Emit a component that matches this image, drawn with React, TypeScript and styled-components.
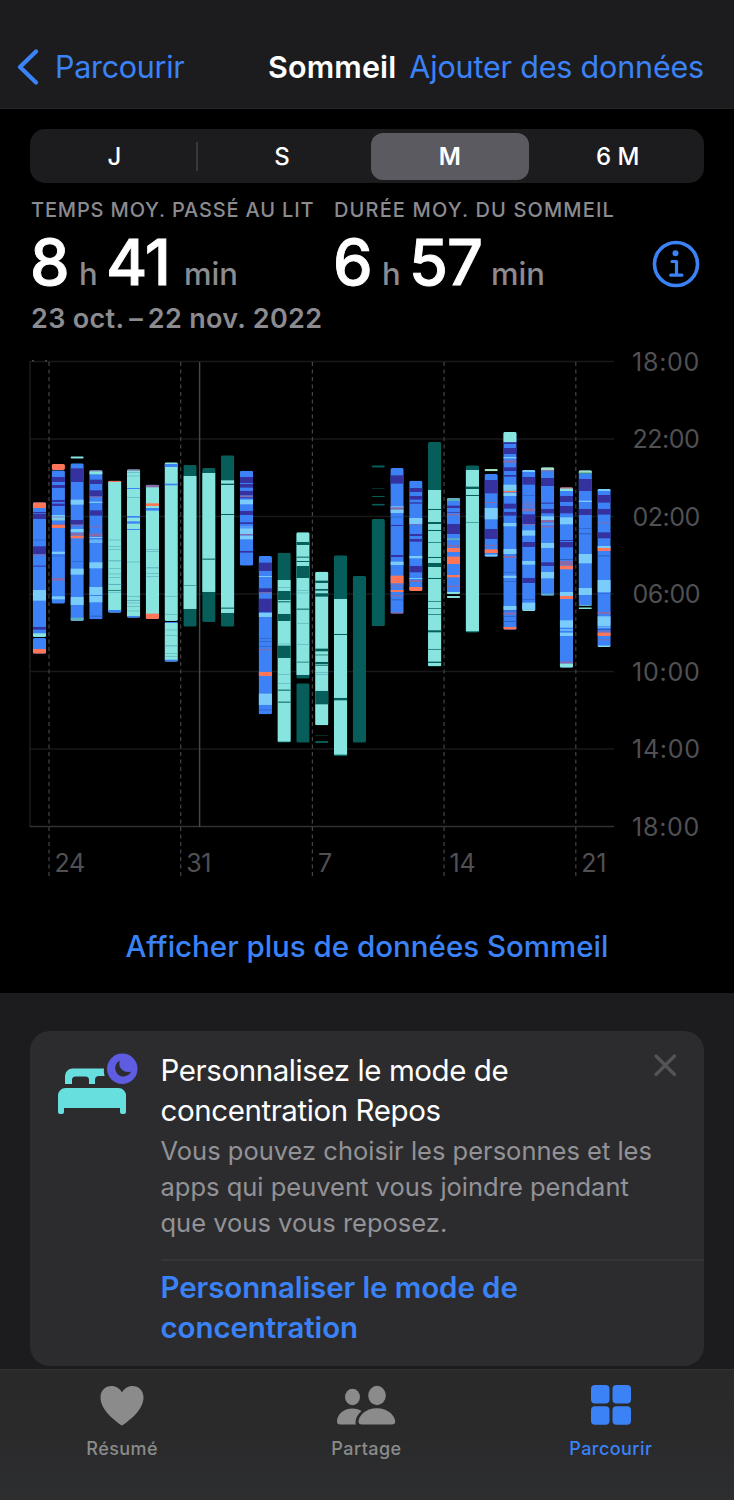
import React from 'react';
import styled, { createGlobalStyle } from 'styled-components';

const GlobalStyle = createGlobalStyle`
  * { box-sizing: border-box; }
  body { margin: 0; background: #000; }
  button { border: 0; padding: 0; background: none; font: inherit; color: inherit; letter-spacing: inherit; }
  h1, h2, p { margin: 0; }
`;

const blue = '#3b82f7';

const Screen = styled.div`
  width: 734px;
  height: 1500px;
  display: flex;
  flex-direction: column;
  overflow: hidden;
  background: #1c1c1e;
  color: #fff;
  font-family: Inter, 'Liberation Sans', sans-serif;
  white-space: nowrap;
`;

const Header = styled.header`
  height: 109px;
  flex: none;
  display: flex;
  align-items: center;
  padding: 25px 30px 0 17px;
  background: #1c1c1e;
  border-bottom: 1px solid #262628;
  font-size: 30.5px;
`;

const BackButton = styled.button`
  display: flex;
  align-items: center;
  gap: 16px;
  color: ${blue};
  letter-spacing: -0.3px;
`;

const Title = styled.h1`
  margin-left: auto;
  font-size: 30.5px;
  font-weight: 600;
  letter-spacing: 0.15px;
`;

const AddButton = styled.button`
  margin-left: 13px;
  color: ${blue};
  letter-spacing: -0.18px;
`;

const ChartPanel = styled.main`
  height: 884px;
  flex: none;
  display: flex;
  flex-direction: column;
  padding-top: 20px;
  background: #000;
`;

const Segments = styled.div`
  margin: 0 30px;
  height: 54px;
  flex: none;
  display: grid;
  grid-template-columns: repeat(4, 1fr);
  padding: 3px 3px 3px 0;
  border-radius: 15px;
  background: #1c1c1e;
`;

const Segment = styled.button<{ $active?: boolean; $divided?: boolean }>`
  position: relative;
  margin: 1px 4px 0 5px;
  border-radius: 12px;
  font-size: 24px;
  font-weight: ${p => (p.$active ? 600 : 500)};
  background: ${p => (p.$active ? '#5b5a60' : 'transparent')};
  &::after {
    content: '';
    display: ${p => (p.$divided ? 'block' : 'none')};
    position: absolute;
    right: -4px;
    top: 9px;
    width: 2px;
    height: 29px;
    background: #38383b;
  }
`;

const Metrics = styled.section`
  height: 105px;
  flex: none;
  display: grid;
  grid-template-columns: 303px 1fr auto;
  padding: 14px 34px 0 31px;
`;

const MetricLabel = styled.div<{ $spacing: number }>`
  height: 27px;
  line-height: 27px;
  font-size: 20px;
  font-weight: 500;
  letter-spacing: ${p => p.$spacing}px;
  color: #8b8b90;
`;

const MetricValue = styled.div`
  display: flex;
  align-items: baseline;
  margin-top: 4px;
  line-height: 68px;
`;

const Figure = styled.span<{ $width: number }>`
  width: ${p => p.$width}px;
  font-size: 63px;
  font-weight: 500;
  -webkit-text-stroke: 0.9px #fff;
  letter-spacing: -1px;
  margin-left: -1px;
`;

const Unit = styled.span<{ $width?: number }>`
  width: ${p => (p.$width ? `${p.$width}px` : 'auto')};
  font-size: 31px;
  font-weight: 500;
  color: #8b8b90;
`;

const InfoButton = styled.button`
  align-self: start;
  margin-top: 43px;
  height: 48px;
`;

const Period = styled.div`
  height: 53px;
  flex: none;
  padding: 14px 0 0 31px;
  line-height: 34px;
  font-size: 27px;
  font-weight: 600;
  letter-spacing: 0.32px;
  color: #8b8b90;
`;

const ChartDrawing = styled.svg`
  display: block;
  flex: none;
  text {
    font-size: 25px;
    fill: #505054;
  }
`;

const MoreLink = styled.button`
  align-self: center;
  margin-top: 35px;
  line-height: 40px;
  font-size: 29.5px;
  font-weight: 500;
  color: ${blue};
`;

const Suggestions = styled.section`
  height: 376px;
  flex: none;
  padding: 38px 30px 0;
`;

const Card = styled.article`
  height: 335px;
  display: grid;
  grid-template-columns: 130.5px 1fr;
  border-radius: 20px;
  background: #2c2c2e;
`;

const CardIcon = styled.div`
  padding: 19px 0 0 24px;
`;

const CardTop = styled.div`
  position: relative;
  height: 230px;
  padding-top: 19px;
  border-bottom: 2px solid #353538;
`;

const CardTitle = styled.h2`
  font-size: 29.5px;
  line-height: 40px;
  font-weight: 400;
  letter-spacing: -0.42px;
`;

const CardText = styled.p`
  margin-top: 3px;
  font-size: 25.5px;
  line-height: 36px;
  color: #929297;
`;

const CloseButton = styled.button`
  position: absolute;
  right: 27px;
  top: 22px;
  height: 24px;
`;

const CardAction = styled.button`
  margin-top: 6px;
  text-align: left;
  font-size: 29.5px;
  line-height: 40px;
  font-weight: 600;
  letter-spacing: -0.1px;
  color: ${blue};
`;

const TabBar = styled.nav`
  flex: 1;
  display: grid;
  grid-template-columns: repeat(3, 1fr);
  padding-right: 1px;
  border-top: 1px solid #323234;
  background: linear-gradient(180deg, #292929 0%, #2a2a2b 50%, #2d2e30 100%);
`;

const Tab = styled.button<{ $active?: boolean }>`
  display: flex;
  flex-direction: column;
  align-items: center;
  padding-top: 14px;
  gap: 10px;
  font-size: 18px;
  font-weight: 500;
  line-height: 26px;
  letter-spacing: 0.45px;
  color: ${p => (p.$active ? blue : '#8b8b8b')};
`;

/* Stage colours; lower-case keys are the hairline marks of very short phases. */
const stageColors: Record<string, string> = {
  A: '#ff7557',
  B: '#3c82f6',
  D: '#3532a0',
  R: '#7accfa',
  L: '#88e4df',
  T: '#065d59',
  G: '#a3e0bd',
  r: '#8a6aa8',
  n: '#2d5fc0',
  k: '#5fb0bd',
  g: '#2a8783',
};

/*
 * Each night is a list of blocks separated by "/". A block is
 * "start end stage" followed by the phases laid over it.
 */
type NightGroup = { offset: number; nights: string[] };

const groups: NightGroup[] = [
  {
    offset: 0,
    nights: [
      '457 861 B,457 474 A,486 507 D,490 492 B,569 571 n,589 613 D,613 616 r,647 650 D,720 752 R,831 839 D,850 861 L/864 911 B,897 911 A',
      '342 360 A/361 761 B,381 396 D,405 414 D,450 456 D,461 468 D,495 508 R,500 502 r,508 511 G,522 525 r,525 534 A,605 612 R,617 619 n,684 687 r,687 692 r,739 748 R',
      '319 326 L/340 813 B,355 396 D,449 464 R,510 524 D,524 527 r,537 547 R,549 555 r,557 565 A,633 635 n,656 674 R,741 765 R,803 813 k',
      '361 808 B,361 373 L,361 364 r,389 402 D,421 440 D,439 442 r,455 459 R,481 497 D,529 532 r,551 559 r,561 564 R,569 572 R,574 578 R,637 655 R,711 757 R,735 738 B,797 800 n',
      '392 788 L,392 396 A,569 571 k,588 590 k,598 600 k,631 634 k,655 657 k,671 673 k,682 684 k,702 705 k,720 723 g,726 728 k,780 788 B',
      '358 803 L,358 362 r,366 368 k,377 379 k,414 417 B,441 443 k,498 503 B,514 521 B,537 540 B,635 637 k,738 740 k,750 753 k,758 760 k,768 770 k,782 784 k,798 803 B',
      '404 807 L,404 412 r,460 468 A,474 482 B,598 600 k,603 605 k,652 655 k,670 672 k,679 681 k,791 807 A',
      '337 813 L,342 351 B,401 406 B,738 740 k,792 794 k/816 935 L,816 819 B,839 841 k,855 857 k,886 889 k,910 912 k,918 920 k,929 935 B',
    ],
  },
  {
    offset: 240,
    nights: [
      '105 590 T,138 537 L,466 468 g',
      '114 576 T,129 486 L,386 389 T',
      '76 590 T,151 549 L,161 165 T,252 255 T,533 536 T',
      '122 407 B,141 159 D,162 173 D,183 196 D,197 201 r,202 205 D,209 223 R,243 255 D,277 282 D,290 292 R,295 312 R,312 316 r,317 328 R,363 368 D',
      '378 853 B,398 423 D,438 441 R,475 487 D,487 490 r,506 546 D,549 561 R,624 626 n,634 636 n,648 650 n,658 661 r,726 738 A,791 825 R,839 841 n',
      '368 938 T,450 935 L,472 474 k,483 510 T,514 517 T,552 573 T,641 643 k,647 684 T,733 735 k,760 762 k,779 782 T,815 818 T',
      '307 746 T,307 735 L,336 345 T,380 383 T,393 396 T,408 444 T,480 482 k,488 490 k,536 539 T,579 581 k,642 644 k,695 698 g/760 938 T',
      '425 886 L,452 459 T,477 482 T,490 500 T,656 664 T,674 676 T,696 703 T,706 708 T,727 729 k,733 735 k,783 823 T/915 917 T/933 939 T',
      '376 979 T,507 974 L,612 615 T,804 811 T',
      '438 938 T',
    ],
  },
  {
    offset: 210,
    nights: [
      '136 143 T/204 206 T/228 231 T/251 257 T/297 619 T',
      '144 581 B,166 191 D,259 264 R,262 269 r,269 279 R,290 292 n,315 318 D,405 411 D,425 435 R,467 490 A,493 495 r,500 502 r,510 516 A,525 529 r,538 541 n,576 581 r',
      '182 513 B,204 216 D,228 239 D,247 251 D,294 312 R,313 315 r,342 348 D,357 365 D,408 415 R,438 457 D,474 477 R,480 486 r,501 513 A',
      '66 740 T,210 738 L,267 270 T,306 312 T,330 333 T,366 368 T,411 414 T,429 441 T,474 477 T,543 545 T,565 567 T,583 585 T,631 637 T,687 689 T,725 729 T',
      '234 522 B,234 243 k,257 264 D,276 278 D,282 286 r,312 342 D,355 360 k,375 380 r,384 396 A,410 432 A,465 472 A,497 501 r,516 522 L/528 534 L',
      '136 638 T,150 634 L,200 207 T,225 228 T,306 308 g',
      '147 154 G/162 410 B,180 220 D,246 249 r,264 298 R,327 357 D,375 378 r,388 399 A,404 410 R',
      '36 629 B,36 66 L,67 72 D,84 102 D,111 115 R,121 128 r,142 153 D,165 170 D,194 208 R,208 212 L,213 217 A,219 228 R,251 266 D,276 287 D,309 319 R,387 402 R,408 414 r,456 458 n,467 474 R,484 486 n,558 570 R,572 574 n,578 584 r,588 590 n,603 606 n,621 629 A',
      '150 573 B,150 156 R,171 194 D,225 227 n,247 249 r,254 257 r,265 274 r,283 313 D,312 315 r,331 347 R,366 381 D,423 434 R,474 489 D,538 540 n,548 569 R,569 573 L',
      '142 527 B,142 151 G,151 154 r,174 198 D,248 251 D,267 280 D,289 300 R,300 307 r,311 313 R,318 322 r,369 384 R,427 438 D,456 475 R,521 527 k',
      '202 743 B,202 206 A,206 213 L,228 246 D,258 280 D,292 313 R,360 363 D,366 382 D,417 420 n,423 435 r,437 448 A,516 528 R,528 537 A,601 623 R,628 632 R,638 648 R,725 731 r,731 743 L',
      '151 558 B,151 160 G,158 161 g,177 213 D,242 246 R,267 285 D,324 326 n,340 343 n,402 430 R,504 525 R,555 558 k/562 567 L',
      '207 681 B,207 213 R,225 248 D,267 284 D,307 310 r,337 355 D,378 384 R,384 393 A,406 409 n,480 517 R,519 521 n,576 582 r,589 618 R,620 623 R,627 630 n,634 638 r,638 648 A,659 661 r,677 681 L',
    ],
  },
];

const nights = groups.flatMap(g => g.nights.map(night => ({ night, offset: g.offset })));

const parse = (entry: string, offset: number) => {
  const [from, to, stage] = entry.split(' ');
  return { y: Number(from) + offset, h: Number(to) - Number(from), fill: stageColors[stage] };
};

const hours = ['18:00', '22:00', '02:00', '06:00', '10:00', '14:00', '18:00'];
const weeks = ['24', '31', '7', '14', '21'];

const SleepChart = () => (
  <ChartDrawing width="734" height="550" viewBox="0 341 734 550" aria-label="Sommeil">
    <path d="M30 361V827" stroke="#202022" strokeWidth="1.3" />
    {hours.map((label, i) => {
      const y = 361.5 + i * 77.5;
      const startsWithOne = label[0] === '1';
      return (
        <g key={i}>
          <path d={`M30 ${y}H614`} stroke={i === 6 ? '#303032' : '#19191b'} strokeWidth="1.4" />
          <text x={startsWithOne ? 632 : 632.5} y={y + 9.3} letterSpacing={startsWithOne ? 0.75 : -0.5}>{label}</text>
        </g>
      );
    })}
    {weeks.map((label, i) => {
      const x = 49 + i * 131.7;
      return (
        <g key={label}>
          <path d={`M${x} 362V876`} stroke="#444447" strokeWidth="1.2" strokeDasharray="4 3.5" />
          <text x={x + 5.5} y="871.5" letterSpacing="-0.3">{label}</text>
        </g>
      );
    })}
    <path d="M199.6 362V827" stroke="#48484b" strokeWidth="1.4" />
    <path d="M32 360.7h2M45 360.7h2" stroke="#48484b" strokeWidth="1.5" />
    {nights.map(({ night, offset }, i) => (
      <g key={i} transform={`translate(${32.8 + i * 18.82} 350) scale(.3333)`}>
        {night.split('/').map((block, j) => {
          const [base, ...phases] = block.split(',').map(e => parse(e, offset));
          const id = `block-${i}-${j}`;
          const radius = Math.min(5, base.h / 2);
          return (
            <g key={id}>
              <clipPath id={id}>
                <rect y={base.y} width="40" height={base.h} rx={radius} />
              </clipPath>
              <g clipPath={`url(#${id})`}>
                <rect y={base.y} width="40" height={base.h} fill={base.fill} />
                {phases.map((p, k) => (
                  <rect key={k} y={p.y} width="40" height={p.h} fill={p.fill} />
                ))}
              </g>
            </g>
          );
        })}
      </g>
    ))}
  </ChartDrawing>
);

const BackIcon = () => (
  <svg width="22" height="36" viewBox="0 0 22 36" fill="none" stroke={blue} strokeWidth="4.2" strokeLinecap="round" strokeLinejoin="round">
    <path d="M19 2.500L3 18l16 15.500" />
  </svg>
);

const InfoIcon = () => (
  <svg width="48" height="48" viewBox="0 0 48 48" fill="none" stroke={blue} strokeWidth="3.2">
    <circle cx="24" cy="24" r="21.500" strokeWidth="3.600" />
    <circle cx="23.500" cy="13.300" r="3" fill={blue} stroke="none" />
    <path d="M20 21.500h4.500v13.700M18.700 35.200h11.200" strokeLinecap="round" strokeLinejoin="round" />
  </svg>
);

const BedIcon = () => (
  <svg width="84" height="66" viewBox="54 1050 84 66">
    <path fill="#67dfdf" d="M65 1084v-8a7.500 7.500 0 0 1 7.500-7.500h31.500a15 15 0 0 0 .6 7.500h-5.600a4 4 0 0 0-4 4v4h-6v-4a3.500 3.500 0 0 0-3.500-3.500h-10a3.500 3.500 0 0 0-3.500 3.500v4z" />
    <path fill="#67dfdf" d="M58 1095.500a7.500 7.500 0 0 1 7.500-7.500h53a7.500 7.500 0 0 1 7.500 7.500v16.500a2 2 0 0 1-2 2h-2a2 2 0 0 1-2-2v-4h-56v4a2 2 0 0 1-2 2h-2a2 2 0 0 1-2-2z" />
    <circle cx="122.300" cy="1068.800" r="15.200" fill="#5e5ce0" />
    <path fill="#2c2c2e" d="M119.800 1060.700a8.300 8.300 0 1 0 11.300 10.700a8.600 8.600 0 0 1-11.300-10.700z" />
  </svg>
);

const CloseIcon = () => (
  <svg width="24" height="24" viewBox="0 0 24 24" stroke="#545457" strokeWidth="3.200" strokeLinecap="round">
    <path d="M3 3l18.500 18.500M21.500 3L3 21.500" />
  </svg>
);

const HeartIcon = () => (
  <svg width="44" height="42" viewBox="0 0 44 42" fill="currentColor">
    <path d="M22 41.500C18 39 .5 27 .5 13.500.5 6.500 5.300 2 11.500 2c4.500 0 8.300 2.500 10.500 6.500C24.200 4.500 28 2 32.500 2c6.200 0 11 4.500 11 11.500C43.500 27 26 39 22 41.500z" />
  </svg>
);

const PeopleIcon = () => (
  <svg width="60" height="42" viewBox="0 0 60 42" fill="currentColor">
    <ellipse cx="16.500" cy="13" rx="7.500" ry="8.200" />
    <ellipse cx="41" cy="11.500" rx="8.800" ry="9.700" />
    <path d="M4 40.500c-2 0-3-1-3-3C1 31 7 24.500 16.500 24.500c3.700 0 6.700 1 9 2.600-4 3.500-6 7.400-6 11.400 0 .8.100 1.400.4 2z" />
    <path d="M26 40.500c-2.500 0-3.500-1-3.500-3 0-5.500 7-13.300 18.300-13.300S59.200 32 59.200 37.500c0 2-1 3-3.500 3z" />
  </svg>
);

const GridIcon = () => (
  <svg width="42" height="42" viewBox="0 0 42 42" fill="currentColor">
    <rect x="1" y="1" width="18.500" height="18.500" rx="4" />
    <rect x="22.500" y="1" width="18.500" height="18.500" rx="4" />
    <rect x="1" y="22.300" width="18.500" height="18.500" rx="4" />
    <rect x="22.500" y="22.300" width="18.500" height="18.500" rx="4" />
  </svg>
);

export default function App() {
  return (
    <Screen>
      <GlobalStyle />
      <Header>
        <BackButton><BackIcon />Parcourir</BackButton>
        <Title>Sommeil</Title>
        <AddButton>Ajouter des données</AddButton>
      </Header>
      <ChartPanel>
        <Segments>
          <Segment $divided>J</Segment>
          <Segment>S</Segment>
          <Segment $active>M</Segment>
          <Segment>6 M</Segment>
        </Segments>
        <Metrics>
          <div>
            <MetricLabel $spacing={0.85}>TEMPS MOY. PASSÉ AU LIT</MetricLabel>
            <MetricValue>
              <Figure $width={49}>8</Figure><Unit $width={28}>h</Unit>
              <Figure $width={78}>41</Figure><Unit>min</Unit>
            </MetricValue>
          </div>
          <div>
            <MetricLabel $spacing={1.15}>DURÉE MOY. DU SOMMEIL</MetricLabel>
            <MetricValue>
              <Figure $width={49}>6</Figure><Unit $width={28}>h</Unit>
              <Figure $width={82}>57</Figure><Unit>min</Unit>
            </MetricValue>
          </div>
          <InfoButton aria-label="Informations"><InfoIcon /></InfoButton>
        </Metrics>
        <Period>{'23 oct.\u2009–\u200922 nov. 2022'}</Period>
        <SleepChart />
        <MoreLink>Afficher plus de données Sommeil</MoreLink>
      </ChartPanel>
      <Suggestions>
        <Card>
          <CardIcon><BedIcon /></CardIcon>
          <div>
            <CardTop>
              <CardTitle>Personnalisez le mode de<br />concentration Repos</CardTitle>
              <CardText>Vous pouvez choisir les personnes et les<br />apps qui peuvent vous joindre pendant<br />que vous vous reposez.</CardText>
              <CloseButton aria-label="Fermer"><CloseIcon /></CloseButton>
            </CardTop>
            <CardAction>Personnaliser le mode de<br />concentration</CardAction>
          </div>
        </Card>
      </Suggestions>
      <TabBar>
        <Tab><HeartIcon />Résumé</Tab>
        <Tab><PeopleIcon />Partage</Tab>
        <Tab $active><GridIcon />Parcourir</Tab>
      </TabBar>
    </Screen>
  );
}
